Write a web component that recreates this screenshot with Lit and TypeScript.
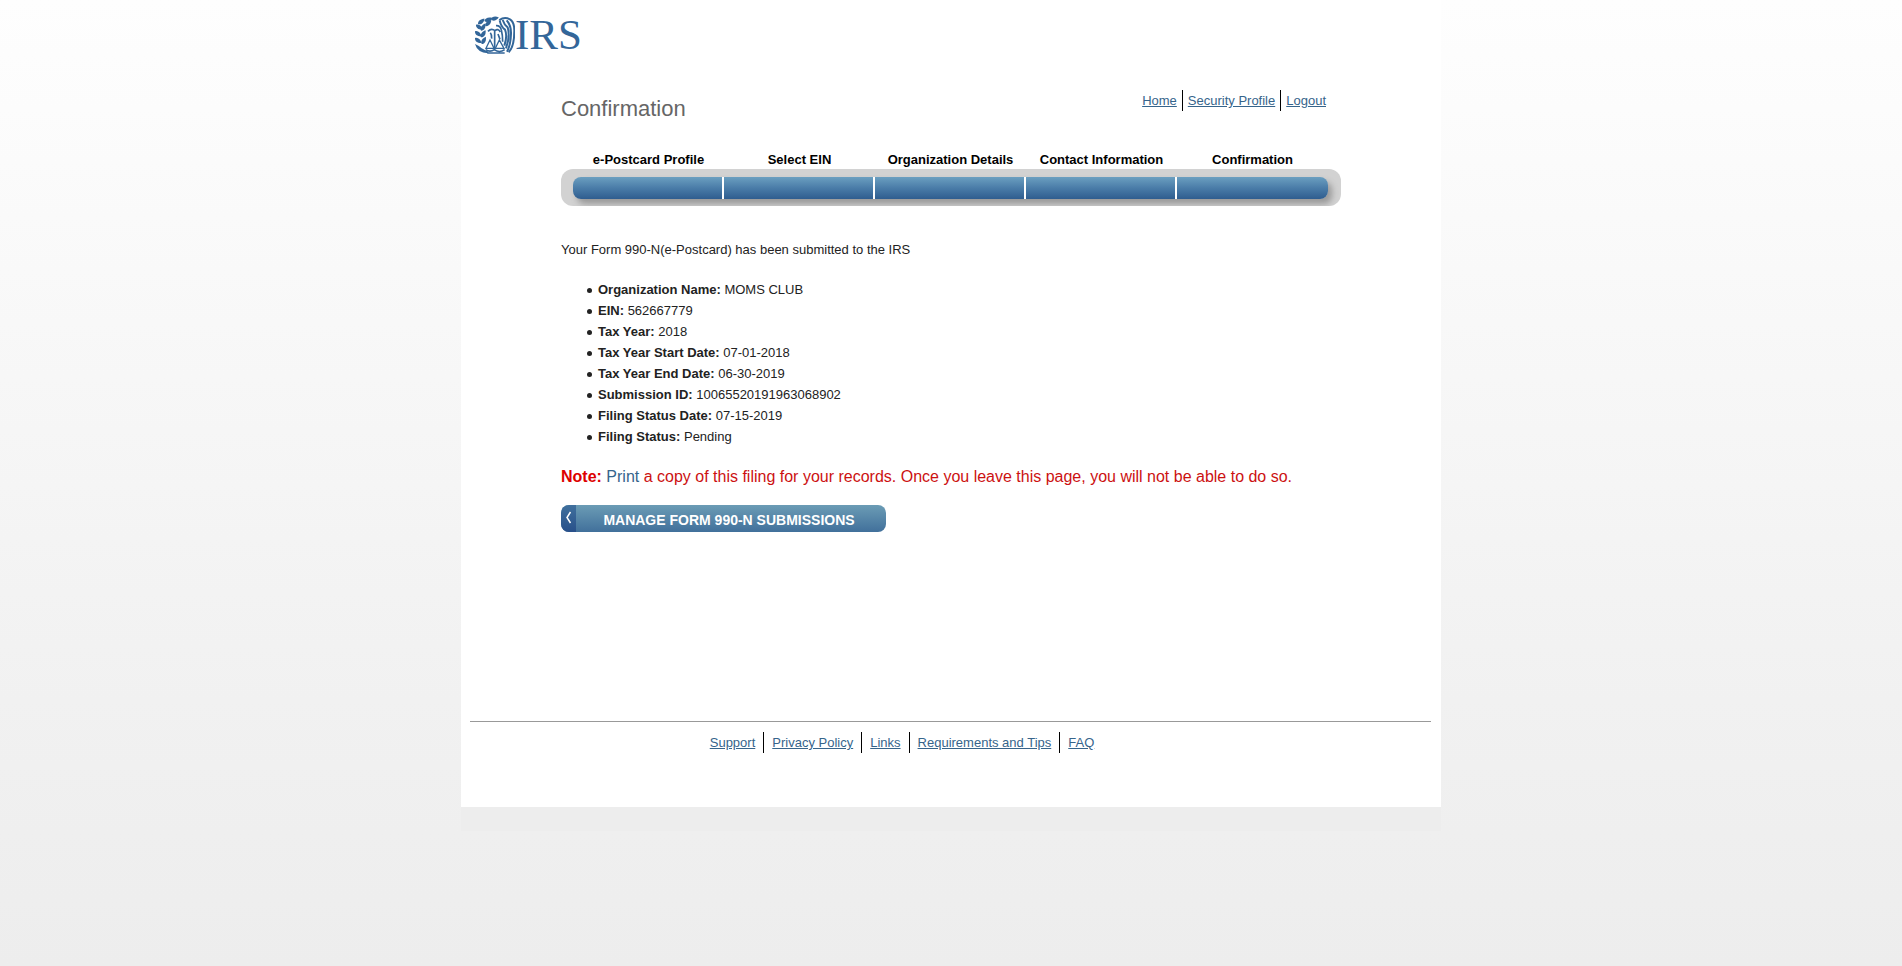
import { LitElement, html, css, svg } from "lit";
import { customElement } from "lit/decorators.js";

const STEPS = [
  "e-Postcard Profile",
  "Select EIN",
  "Organization Details",
  "Contact Information",
  "Confirmation",
];

const DETAILS: [string, string][] = [
  ["Organization Name:", "MOMS CLUB"],
  ["EIN:", "562667779"],
  ["Tax Year:", "2018"],
  ["Tax Year Start Date:", "07-01-2018"],
  ["Tax Year End Date:", "06-30-2019"],
  ["Submission ID:", "10065520191963068902"],
  ["Filing Status Date:", "07-15-2019"],
  ["Filing Status:", "Pending"],
];

const USER_LINKS = ["Home", "Security Profile", "Logout"];
const FOOTER_LINKS = ["Support", "Privacy Policy", "Links", "Requirements and Tips", "FAQ"];

const leaf = (x: number, y: number, angle: number) =>
  svg`<path transform="translate(${x} ${y}) rotate(${angle})" d="M0 0C4-8 15-9 25-3C17 6 6 8 0 0Z"/>`;

@customElement("app-root")
export class AppRoot extends LitElement {
  static styles = css`
    :host {
      display: block;
      min-height: 100vh;
      background: linear-gradient(#fefefe, #f1f1f1 700px, #ededed 966px);
      font-family: "Liberation Sans", Arial, sans-serif;
      font-size: 13px;
      line-height: 21px;
      color: #222;
    }
    a {
      color: #36648b;
    }
    .page {
      max-width: 980px;
      margin: 0 auto;
      border-bottom: 24px solid #ededed;
      background: #fff;
    }
    .brand {
      display: flex;
      padding: 16px 12px 0;
      color: #336699;
    }
    .emblem {
      width: 42px;
      height: 38px;
    }
    .brand-name {
      font: 43px/38px "Liberation Serif", "Times New Roman", serif;
    }
    .content {
      max-width: 780px;
      min-height: 667px;
      margin: 0 auto;
      padding-top: 36px;
      box-sizing: border-box;
    }
    .heading-row {
      display: flex;
      justify-content: space-between;
      align-items: flex-start;
      padding-right: 15px;
    }
    h1 {
      margin: 6px 0 0;
      font-size: 22px;
      line-height: 26px;
      font-weight: normal;
      color: #666;
    }
    .links {
      display: flex;
      flex-wrap: wrap;
      margin: 0;
      padding: 0;
      list-style: none;
    }
    .links li + li {
      border-left: 1px solid #000;
    }
    .user-links li + li {
      margin-left: 5px;
      padding-left: 5px;
    }
    .steps {
      display: grid;
      grid-template-columns: repeat(5, 1fr);
      margin: 29px 0 0;
      padding: 0 13px 0 12px;
      list-style: none;
      font-weight: bold;
      line-height: 18px;
      text-align: center;
      color: #000;
    }
    .track {
      padding: 8px 13px 7px 12px;
      border-radius: 12px;
      background: #d2d2d2;
      overflow: hidden;
    }
    .segments {
      display: grid;
      grid-template-columns: repeat(5, 1fr);
      height: 22px;
      border-radius: 8px;
      background: linear-gradient(#6b9fc0, #4a7ca8 50%, #2f5d8f);
      box-shadow: 4px 5px 6px #999;
    }
    .segment:not(:last-child) {
      border-right: 2px solid #fff;
    }
    .message {
      margin: 33px 0 0;
    }
    .details {
      margin: 19px 0 0;
      padding-left: 26px;
      list-style: none;
    }
    .details li::before {
      content: "";
      display: inline-block;
      width: 5px;
      height: 5px;
      margin-right: 6px;
      border-radius: 50%;
      background: #222;
      vertical-align: 1px;
    }
    .note {
      margin: 19px 0 0;
      font-size: 16px;
      color: #cc1111;
    }
    .note a {
      text-decoration: none;
    }
    .note strong {
      color: #dd0000;
    }
    .manage {
      display: flex;
      width: 325px;
      height: 27px;
      margin-top: 18px;
      padding: 0;
      border: 0;
      border-radius: 8px;
      overflow: hidden;
      background: linear-gradient(#6b9cb5, #41709b);
      font: bold 14px/30px "Liberation Sans", Arial, sans-serif;
      color: #fff;
    }
    .arrow {
      width: 15px;
      height: 27px;
      background: linear-gradient(#40709d, #28508a);
    }
    .manage-label {
      flex: 1;
      padding-right: 4px;
    }
    footer {
      margin: 0 10px 0 9px;
      padding: 10px 0 54px;
      border-top: 1px solid #999;
    }
    .footer-links {
      justify-content: center;
      padding-right: 97px;
    }
    .footer-links li + li {
      margin-left: 8px;
      padding-left: 8px;
    }
  `;

  private links(items: string[], kind: string) {
    return html`<ul class="links ${kind}">
      ${items.map((item) => html`<li><a href="#">${item}</a></li>`)}
    </ul>`;
  }

  render() {
    return html`
      <div class="page">
        <header class="brand">
          <svg class="emblem" viewBox="9 12 126 114" fill="currentColor" aria-hidden="true">
            ${leaf(24, 36, -32)} ${leaf(43, 27, -14)} ${leaf(62, 22, -6)}
            ${leaf(18, 38, 42)} ${leaf(15, 58, 44)} ${leaf(15, 78, 44)}
            ${leaf(33, 56, -52)} ${leaf(33, 76, -50)} ${leaf(35, 96, -54)}
            ${leaf(46, 42, -38)}
            <path d="M15 96Q28 101 35 109Q46 116 56 119L54 124Q22 122 15 96Z" />
            <g fill="none" stroke="currentColor" stroke-width="5">
              <path d="M74 54V112M54 58Q64 47 75 56Q84 48 91 60" />
              <path d="M60 84L48 109H72ZM88 84L76 109H102Z" stroke-width="4" />
              <path d="M47 113Q60 122 73 113Q88 124 104 113M52 123H104" />
              <path d="M88 24Q104 13 120 22Q133 30 133 56Q133 104 116 121" stroke-width="6" />
              <path d="M89 25Q93 44 105 53Q113 72 103 101M98 24Q103 39 113 46Q121 73 108 109M110 25Q124 41 123 66Q122 99 111 119" stroke-width="6" />
              <path d="M78 41Q91 40 94 54Q98 69 98 89M61 62Q66 68 65 80M84 66L90 82" />
            </g>
          </svg>
          <span class="brand-name">IRS</span>
        </header>
        <main class="content">
          <div class="heading-row">
            <h1>Confirmation</h1>
            <nav aria-label="Account">${this.links(USER_LINKS, "user-links")}</nav>
          </div>
          <ol class="steps">
            ${STEPS.map((step) => html`<li>${step}</li>`)}
          </ol>
          <div class="track">
            <div class="segments">
              ${STEPS.map(() => html`<span class="segment"></span>`)}
            </div>
          </div>
          <p class="message">Your Form 990-N(e-Postcard) has been submitted to the IRS</p>
          <ul class="details">
            ${DETAILS.map(([name, value]) => html`<li><strong>${name}</strong> ${value}</li>`)}
          </ul>
          <p class="note">
            <strong>Note:</strong> <a href="#">Print</a> a copy of this filing for your records. Once you leave this page, you will not be able to do so.
          </p>
          <button class="manage" type="button">
            <svg class="arrow" viewBox="0 0 15 27" aria-hidden="true">
              <path d="M9.500 7L6 12.500L9.500 18" fill="none" stroke="#fff" stroke-width="1.500" />
            </svg>
            <span class="manage-label">MANAGE FORM 990-N SUBMISSIONS</span>
          </button>
        </main>
        <footer>
          <nav aria-label="Footer">${this.links(FOOTER_LINKS, "footer-links")}</nav>
        </footer>
      </div>
    `;
  }
}
